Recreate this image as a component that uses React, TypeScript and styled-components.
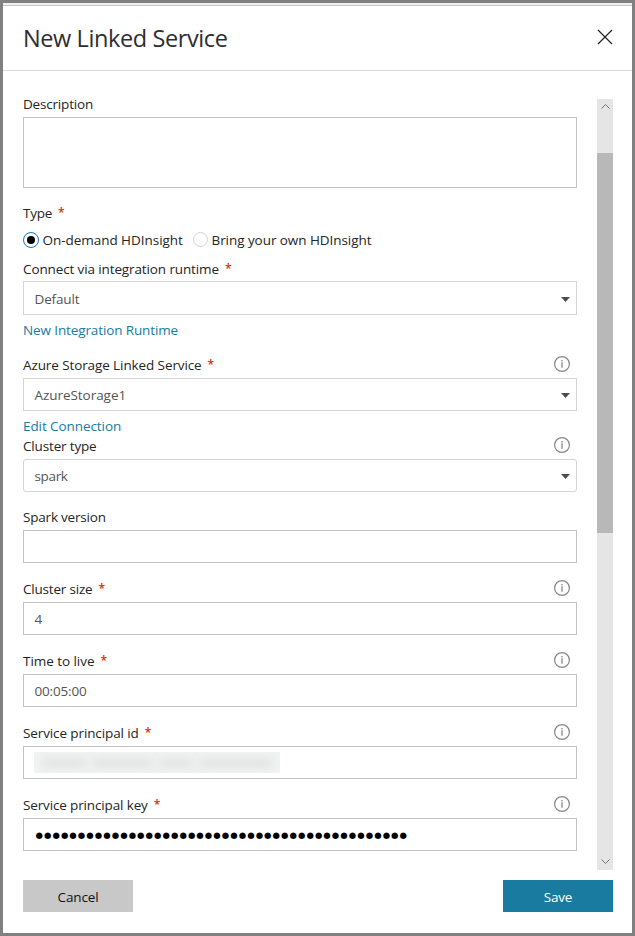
import React from "react";
import styled, { createGlobalStyle } from "styled-components";

const GlobalStyle = createGlobalStyle`
  *, *::before, *::after { box-sizing: border-box; }
  body { margin: 0; background: #fff; }
`;

const Dialog = styled.div`
  display: flex;
  flex-direction: column;
  width: 635px;
  height: 936px;
  border: 3px solid #808080;
  background: #fff;
  color: #252525;
  font: 13.5px/20px "Open Sans", "Noto Sans", sans-serif;
`;

const TopEdge = styled.div`
  height: 3px;
  background: #f0f0f0;
  border-bottom: 1px solid #c6c6c6;
`;

const Header = styled.header`
  display: flex;
  justify-content: space-between;
  height: 65px;
  padding: 15px 19px 0 20px;
  border-bottom: 1px solid #d9d9d9;
`;

const Title = styled.h1`
  margin: 0;
  color: #2e2e2e;
  font-size: 23.5px;
  font-weight: 400;
  line-height: 34px;
  letter-spacing: -0.4px;
`;

const CloseButton = styled.button`
  align-self: flex-start;
  display: flex;
  margin: 8px 0 0;
  padding: 0;
  border: 0;
  background: none;
`;

const Body = styled.main`
  display: flex;
  justify-content: space-between;
  height: 771px;
  margin: 28px 19px 0 20px;
`;

const Form = styled.form`
  display: flex;
  flex-direction: column;
  width: 554px;
  margin-top: -5px;
`;

const Field = styled.div<{ $after?: number }>`
  display: flex;
  flex-direction: column;
  margin-bottom: ${(p) => p.$after ?? 16}px;
`;

const LabelRow = styled.div<{ $gap?: number }>`
  display: flex;
  height: 20px;
  margin-bottom: ${(p) => p.$gap ?? 3}px;
`;

const Text = styled.span<{ $track?: number }>`
  letter-spacing: ${(p) => p.$track ?? 0}px;
  white-space: pre;
`;

const Star = styled.span`
  margin: 0 0 0 6px;
  color: #d42e00;
  font-size: 12px;
  font-weight: 600;
`;

const InfoSlot = styled.span`
  display: flex;
  margin: 1px 7px 0 auto;
`;

const Box = styled.div<{ $height?: number; $select?: boolean; $radius?: number }>`
  display: flex;
  align-items: flex-start;
  justify-content: space-between;
  height: ${(p) => p.$height ?? 33}px;
  padding: ${(p) => ((p.$height ?? 33) === 34 ? 7 : 6)}px 6px 0 10.5px;
  border: 1px solid ${(p) => (p.$select ? "#d4d4d4" : "#c3c3c3")};
  border-radius: ${(p) => p.$radius ?? 0}px;
  color: #555;
`;

const Caret = styled.svg`
  margin-top: 8px;
`;

const Link = styled.a`
  height: 20px;
  color: #1a7b9f;
`;

const Radios = styled.div`
  display: flex;
  height: 20px;
  margin-bottom: 9px;
`;

const RadioOption = styled.label<{ $width: number }>`
  display: flex;
  width: ${(p) => p.$width}px;
  gap: 3.5px;
`;

const RadioMark = styled.span<{ $on?: boolean }>`
  display: flex;
  align-items: center;
  justify-content: center;
  width: ${(p) => (p.$on ? 16 : 15)}px;
  height: ${(p) => (p.$on ? 16 : 15)}px;
  margin-top: 2px;
  border: 1px solid ${(p) => (p.$on ? "#1473cf" : "#d2d2d2")};
  border-radius: 50%;

  &::after {
    content: "";
    width: 8px;
    height: 8px;
    border-radius: 50%;
    background: ${(p) => (p.$on ? "#000" : "transparent")};
  }
`;

const Redacted = styled.div`
  display: flex;
  align-items: center;
  gap: 6px;
  width: 246px;
  height: 21px;
  margin: -1px 0 0 -0.5px;
  padding: 0 8px;
  background: #f2f3f3;
  overflow: hidden;
`;

const Smudge = styled.span<{ $width: number }>`
  width: ${(p) => p.$width}px;
  height: 10px;
  background: #e1e3e3;
  filter: blur(5px);
`;

const Password = styled.span`
  margin: 0 0 0 1px;
  color: #000;
  font: 8.5px/20px "DejaVu Sans", sans-serif;
  letter-spacing: 1.05px;
  white-space: nowrap;
`;

const ScrollBar = styled.div`
  display: flex;
  flex-direction: column;
  align-items: center;
  width: 16px;
  background: #e5e5e5;
`;

const Thumb = styled.div`
  width: 16px;
  height: 380px;
  margin: 44px 0 auto;
  background: #b8b8b8;
`;

const Chevron = styled.svg`
  margin: 5px 0 0;
  height: 5px;
`;

const ChevronDown = styled(Chevron)`
  margin: 0 0 6px;
`;

const Footer = styled.footer`
  display: flex;
  justify-content: space-between;
  margin: 10px 19px 0 20px;
`;

const Button = styled.button<{ $primary?: boolean }>`
  width: 110px;
  height: 32px;
  padding: 2px 0 0;
  border: 0;
  background: ${(p) => (p.$primary ? "#1a7ba0" : "#c8c8c8")};
  color: ${(p) => (p.$primary ? "#fff" : "#111")};
  font: inherit;
`;

const InfoIcon = () => (
  <InfoSlot>
    <svg width="16" height="16" viewBox="0 0 16 16">
      <circle cx="8" cy="8" r="7.4" fill="none" stroke="#868686" strokeWidth="1.2" />
      <path d="M8 4v1.4M8 6.2v5.6" stroke="#a3a3a3" strokeWidth="1.7" />
    </svg>
  </InfoSlot>
);

type LabelProps = { text: string; track: number; required?: boolean; info?: boolean; gap?: number };

const Label = ({ text, track, required, info, gap }: LabelProps) => (
  <LabelRow $gap={gap}>
    <Text $track={track}>{text}</Text>
    {required && <Star>*</Star>}
    {info && <InfoIcon />}
  </LabelRow>
);

type SelectProps = { value: string; track: number; height?: number; radius?: number };

const Select = ({ value, track, height, radius }: SelectProps) => (
  <Box $select $height={height} $radius={radius}>
    <Text $track={track}>{value}</Text>
    <Caret width="9" height="5" viewBox="0 0 9 5">
      <path d="M0 0h9L4.5 5z" fill="#4d4d4d" />
    </Caret>
  </Box>
);

export default function App() {
  return (
    <>
      <GlobalStyle />
      <Dialog>
        <TopEdge />
        <Header>
          <Title>New Linked Service</Title>
          <CloseButton aria-label="Close">
            <svg width="16" height="16" viewBox="0 0 16 16">
              <path d="M1 1l14 14M15 1L1 15" stroke="#222" strokeWidth="1.2" />
            </svg>
          </CloseButton>
        </Header>
        <Body>
          <Form>
            <Field $after={15}>
              <Label text="Description" track={-0.19} />
              <Box $height={71} />
            </Field>
            <Label text="Type" track={-0.25} required gap={7} />
            <Radios>
              <RadioOption $width={170}>
                <RadioMark $on />
                <Text $track={-0.04}>On-demand HDInsight</Text>
              </RadioOption>
              <RadioOption $width={200}>
                <RadioMark />
                <Text $track={-0.06}>Bring your own HDInsight</Text>
              </RadioOption>
            </Radios>
            <Field $after={5}>
              <Label text="Connect via integration runtime" track={-0.12} required gap={2} />
              <Select value="Default" track={-0.15} height={34} />
            </Field>
            <Field $after={15}>
              <Link><Text $track={-0.12}>New Integration Runtime</Text></Link>
            </Field>
            <Field $after={5}>
              <Label text="Azure Storage Linked Service" track={-0.1} required info />
              <Select value="AzureStorage1" track={-0.05} />
            </Field>
            <Link><Text $track={-0.08}>Edit Connection</Text></Link>
            <Field $after={15}>
              <Label text="Cluster type" track={-0.16} info />
              <Select value="spark" track={-0.35} radius={3} />
            </Field>
            <Field>
              <Label text="Spark version" track={-0.2} />
              <Box />
            </Field>
            <Field>
              <Label text="Cluster size" track={-0.2} required info />
              <Box><Text>4</Text></Box>
            </Field>
            <Field>
              <Label text="Time to live" track={-0.05} required info />
              <Box><Text $track={-0.18}>00:05:00</Text></Box>
            </Field>
            <Field>
              <Label text="Service principal id" track={-0.11} required info />
              <Box>
                <Redacted>
                  <Smudge $width={44} />
                  <Smudge $width={62} />
                  <Smudge $width={34} />
                  <Smudge $width={74} />
                </Redacted>
              </Box>
            </Field>
            <Field>
              <Label text="Service principal key" track={-0.14} required info />
              <Box><Password>{"●".repeat(44)}</Password></Box>
            </Field>
          </Form>
          <ScrollBar>
            <Chevron width="9" viewBox="0 0 9 5">
              <path d="M.5 4.5l4-4 4 4" fill="none" stroke="#777" />
            </Chevron>
            <Thumb />
            <ChevronDown width="9" viewBox="0 0 9 5">
              <path d="M.5.5l4 4 4-4" fill="none" stroke="#777" />
            </ChevronDown>
          </ScrollBar>
        </Body>
        <Footer>
          <Button><Text $track={-0.15}>Cancel</Text></Button>
          <Button $primary><Text $track={-0.2}>Save</Text></Button>
        </Footer>
      </Dialog>
    </>
  );
}
